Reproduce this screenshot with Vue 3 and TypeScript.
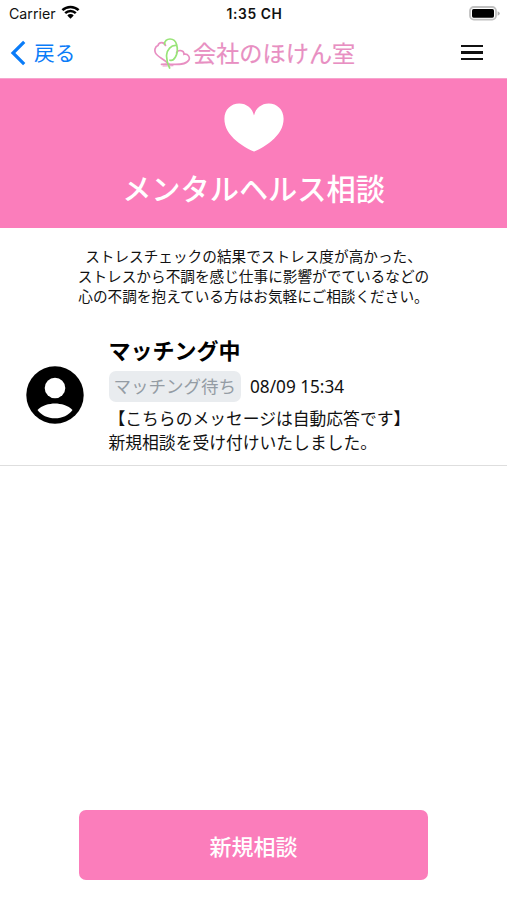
<script setup lang="ts">
interface Consultation {
  title: string
  status: string
  date: string
  message: string[]
}

const description: string[] = [
  'ストレスチェックの結果でストレス度が高かった、',
  'ストレスから不調を感じ仕事に影響がでているなどの',
  '心の不調を抱えている方はお気軽にご相談ください。',
]

const consultations: Consultation[] = [
  {
    title: 'マッチング中',
    status: 'マッチング待ち',
    date: '08/09 15:34',
    message: ['【こちらのメッセージは自動応答です】', '新規相談を受け付けいたしました。'],
  },
]
</script>

<template>
  <div class="screen">
    <div class="status-bar">
      <div class="carrier">
        <span>Carrier</span>
        <svg class="wifi" width="19" height="14" viewBox="0 0 18 14">
          <g fill="none" stroke="#000" stroke-width="2.5">
            <path d="M0.9 5.2a11.6 11.6 0 0 1 16.2 0" />
            <path d="M3.7 8.2a7.6 7.6 0 0 1 10.6 0" />
          </g>
          <path d="M9 13.7 5.8 10.4a4.5 4.5 0 0 1 6.4 0z" />
        </svg>
      </div>
      <span class="clock">1:35 CH</span>
      <svg class="battery" width="31" height="15" viewBox="0 0 31 15">
        <rect x="1" y="1" width="26" height="12.6" rx="3.8" fill="#fff" stroke="#c0c0c0" stroke-width="1.8" />
        <rect x="3" y="2.9" width="22" height="8.8" rx="1.6" />
        <path d="M28.6 5.2q2.2 .8 2.2 2.3t-2.2 2.3z" fill="#b0b0b0" />
      </svg>
    </div>

    <header class="nav">
      <button class="back">
        <svg width="17" height="26" viewBox="0 0 17 26">
          <path d="M14.2 1.8 3 13l11.2 11.2" fill="none" stroke="#0a7cf8" stroke-width="3.2" />
        </svg>
        <span>戻る</span>
      </button>
      <div class="brand">
        <svg width="37" height="32" viewBox="0 0 37 32" fill="none" stroke-width="1.700" stroke-linecap="round">
          <path stroke="#e88fc2" d="M11.500 8.500C10.500 4.800 5 4.300 4 8.500C.800 9.500 .300 13.500 1.500 16C3.500 20 9.500 21.500 13.500 26" />
          <path stroke="#e88fc2" d="M22.500 16C23.500 12.500 30 12.500 30 17.300C34 16.300 36.500 20.500 34.700 23.300C31.500 28.500 22 27.400 16 27.200C13 27 10 27 7.500 27.300" />
          <path stroke="#e88fc2" stroke-width="1" d="M9 29L19 28.700" />
          <path stroke="#98e477" d="M10.500 7.500C10.300 4 13 2 16 2C19.500 2 21.800 4.500 22.600 7.500C24 12.500 23.300 17 21.300 20.300C19.800 22.800 17.500 23.700 16 23.200" />
          <path stroke="#98e477" d="M22.300 8.500C17 8 13 13 12.600 18C12.300 23 13.500 27 15.600 31" />
        </svg>
        <span>会社のほけん室</span>
      </div>
      <button class="menu" aria-label="メニュー">
        <i></i><i></i><i></i>
      </button>
    </header>

    <section class="hero">
      <svg width="60" height="49" viewBox="0 0 60 49">
        <path fill="#fff" d="M30 48.500C27 47.800 19 43.500 12.500 38C4.500 31.200 .400 24 .400 15.700C.400 6.500 7 .500 15.300 .500C22.500 .500 28.500 5.300 30 12.500C31.500 5.300 37.500 .500 44.700 .500C53 .500 59.600 6.500 59.600 15.700C59.600 24 55.500 31.200 47.500 38C41 43.500 33 47.800 30 48.500Z" />
      </svg>
      <h1>メンタルヘルス相談</h1>
    </section>

    <div class="description">
      <p v-for="line in description" :key="line">{{ line }}</p>
    </div>

    <main class="list">
      <article v-for="item in consultations" :key="item.date" class="row">
        <svg class="avatar" width="58" height="58" viewBox="0 0 58 58">
          <circle cx="29" cy="29" r="28.700" />
          <circle cx="29" cy="22" r="10.300" fill="#fff" />
          <path fill="#fff" d="M11.500 44C15.500 39.500 23.300 37.500 29 37.500S42.500 39.500 46.500 44C42.500 49.500 36.300 52.300 29 52.300S15.500 49.500 11.500 44Z" />
        </svg>
        <div class="body">
          <h2>{{ item.title }}</h2>
          <div class="meta">
            <span class="chip">{{ item.status }}</span>
            <time>{{ item.date }}</time>
          </div>
          <div class="message">
            <p v-for="line in item.message" :key="line">{{ line }}</p>
          </div>
        </div>
      </article>
    </main>

    <footer class="footer">
      <button class="primary">新規相談</button>
    </footer>
  </div>
</template>

<style>
body {
  margin: 0;
  background: #fff;
}
</style>

<style scoped>
.screen {
  display: flex;
  flex-direction: column;
  width: 507px;
  height: 900px;
  overflow: hidden;
  background: #fff;
  color: #111;
  font-family: Inter, 'Noto Sans CJK JP', sans-serif;
}
h1,
h2,
p {
  margin: 0;
  white-space: nowrap;
}
button {
  padding: 0;
  border: 0;
  background: none;
  font-family: inherit;
}
.status-bar {
  display: grid;
  grid-template-columns: 1fr auto 1fr;
  align-items: center;
  height: 27px;
  padding: 0 7px 0 9px;
  font-size: 14.200px;
  line-height: 26px;
}
.carrier {
  display: flex;
  align-items: center;
  gap: 5px;
}
.carrier span {
  margin-top: 1px;
}
.wifi {
  margin-top: -3px;
}
.clock {
  font-size: 13.800px;
  font-weight: 600;
  letter-spacing: 0.600px;
}
.battery {
  justify-self: end;
  margin-top: -1px;
}
.nav {
  display: grid;
  grid-template-columns: 154px 1fr 46px;
  align-items: center;
  height: 51px;
  border-bottom: 1px solid #f6a5cd;
}
.back {
  display: flex;
  align-items: center;
  gap: 7px;
  padding-left: 10px;
  color: #0a7cf8;
  font-size: 20.700px;
  line-height: 30px;
}
.back span {
  padding-top: 2px;
}
.brand {
  display: flex;
  align-items: center;
  gap: 2px;
  color: #e88fc2;
  font-size: 23.200px;
  font-weight: 400;
  line-height: 34px;
  white-space: nowrap;
}
.brand span {
  padding-top: 2px;
  -webkit-text-stroke: 0.200px #e88fc2;
}
.menu {
  display: flex;
  flex-direction: column;
  gap: 4px;
  width: 22px;
}
.menu i {
  height: 2.300px;
  background: #111;
}
.hero {
  display: flex;
  flex-direction: column;
  align-items: center;
  height: 124px;
  padding-top: 25px;
  background: #fb7dbb;
}
.hero svg {
  margin-top: -1px;
}
.hero h1 {
  margin-top: 17px;
  color: #fff;
  font-size: 29.200px;
  font-weight: 500;
  line-height: 42px;
}
.description {
  padding-top: 20px;
  font-size: 14.650px;
  line-height: 19.900px;
  text-align: center;
}
.row {
  display: flex;
  align-items: center;
  gap: 24.500px;
  height: 138px;
  padding: 19px 0 0 26px;
  border-bottom: 1px solid #dedede;
}
.avatar {
  flex: none;
  margin-top: -2px;
}
.body h2 {
  color: #000;
  font-size: 22px;
  font-weight: 700;
  line-height: 30px;
}
.meta {
  display: flex;
  align-items: center;
  gap: 9px;
  margin-top: 5px;
}
.chip {
  padding: 0 5px;
  border-radius: 7px;
  background: #e9ecef;
  color: #949ca4;
  font-size: 17.500px;
  line-height: 31px;
}
.meta time {
  margin-top: -1px;
  font-family: 'Noto Sans', sans-serif;
  font-size: 17.200px;
}
.message {
  margin-top: 5px;
  font-size: 16.800px;
  line-height: 24px;
}
.footer {
  display: flex;
  justify-content: center;
  margin-top: auto;
  padding-bottom: 20px;
}
.primary {
  width: 349px;
  height: 70px;
  border-radius: 7px;
  background: #fb7dbb;
  color: #fff;
  font-size: 22px;
  font-weight: 500;
}
</style>
